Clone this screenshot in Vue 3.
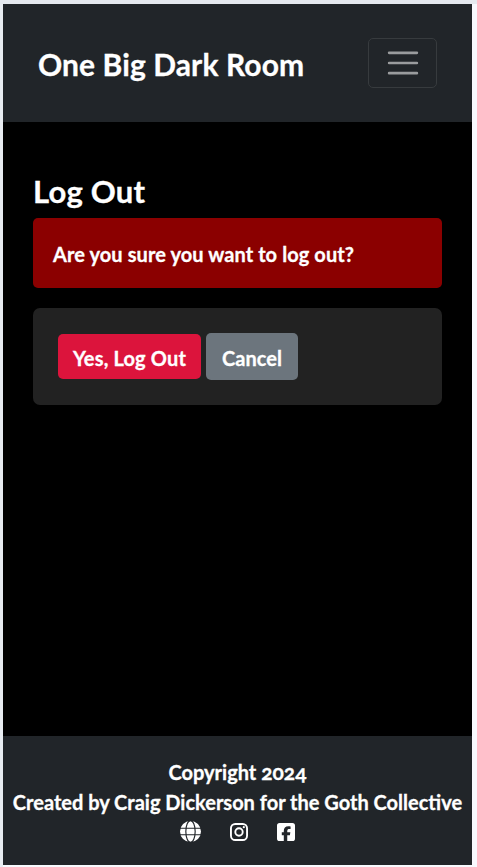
<script setup>
const creator = 'Craig Dickerson'
</script>

<template>
  <div class="frame">
    <div class="page">
      <header class="navbar">
        <a class="brand"><span>One Big Dark Room</span></a>
        <button class="toggler" aria-label="Toggle navigation">
          <svg width="38" height="38" viewBox="0 0 30 30">
            <path d="M4 7h22M4 15h22M4 23h22" stroke="rgba(255,255,255,.55)" stroke-width="2" stroke-linecap="round" />
          </svg>
        </button>
      </header>
      <main class="content">
        <h1>Log Out</h1>
        <div class="alert">Are you sure you want to log out?</div>
        <div class="card">
          <button class="btn danger">Yes, Log Out</button>
          <button class="btn secondary">Cancel</button>
        </div>
      </main>
      <footer class="footer">
        <p class="copy">Copyright <span class="year">2024</span></p>
        <p class="credit">Created by {{ creator }} for the Goth Collective</p>
        <div class="links">
          <svg class="globe" viewBox="0 0 512 512" fill="#fff">
            <circle cx="256" cy="256" r="256" />
            <g fill="none" stroke="#212529" stroke-width="28">
              <path d="M0 176H512M0 336H512" />
              <ellipse cx="256" cy="256" rx="114" ry="264" />
            </g>
          </svg>
          <svg class="social" viewBox="0 0 18 18" fill="none" stroke="#fff">
            <rect x=".95" y=".95" width="16.1" height="16.1" rx="4.3" stroke-width="1.9" />
            <circle cx="9" cy="9" r="3.7" stroke-width="1.9" />
            <circle cx="13.8" cy="4.2" r="1.1" fill="#fff" stroke="none" />
          </svg>
          <svg class="social" viewBox="0 0 448 448" fill="#fff">
            <path d="M64 0H384a64 64 0 0 1 64 64V384a64 64 0 0 1-64 64H255V303h66l11-72h-77v-26c0-39 15-54 55-54 12 0 22 0 28 1V87c-11-3-37-6-52-6-80 0-117 38-117 120v30h-50v72h50V448H64a64 64 0 0 1-64-64V64A64 64 0 0 1 64 0z" />
          </svg>
        </div>
      </footer>
    </div>
  </div>
</template>

<style>
body { margin: 0; background: #f8f9fe; }
</style>

<style scoped>
* { box-sizing: border-box; }
.frame {
  height: 867px;
  padding: 4px 5px 2px 3px;
  background: linear-gradient(#e5e9ef 0 4px, transparent 4px), linear-gradient(90deg, #e8ecf1 0 3px, #f8f9fe 3px);
}
.page {
  display: flex;
  flex-direction: column;
  height: 861px;
  background: #000;
  color: #fff;
  font-family: Lato, "Noto Sans", sans-serif;
  font-size: 20px;
  font-weight: 700;
  line-height: 30px;
  white-space: nowrap;
  -webkit-text-stroke: .3px #fff;
}
.navbar {
  display: flex;
  align-items: center;
  justify-content: space-between;
  height: 118px;
  padding: 0 35px;
  background: #212529;
}
.brand { font-size: 30px; line-height: 46px; padding-top: 1px; letter-spacing: .1px; }
.toggler {
  display: grid;
  place-items: center;
  width: 69px;
  height: 50px;
  padding: 0;
  background: transparent;
  border: 1px solid #373b3e;
  border-radius: 5px;
}
.content { flex: 1; padding: 49px 30px 0; }
h1 { margin: 0; height: 47px; font-size: 31px; line-height: 40px; font-weight: 700; letter-spacing: .2px; }
.alert { height: 70px; padding: 21px 20px; background: #8b0000; border-radius: 5px; letter-spacing: .09px; }
.card {
  display: flex;
  align-items: center;
  gap: 5px;
  height: 97px;
  margin-top: 20px;
  padding: 0 25px;
  background: #222;
  border-radius: 7px;
}
.btn { padding: 3px 0 0; border: 0; border-radius: 5px; color: #fff; font: inherit; }
.danger { width: 143px; height: 45px; background: #dc143c; letter-spacing: .15px; }
.secondary { width: 92px; height: 47px; background: #6c757d; }
.footer { height: 129px; padding-top: 21px; background: #212529; text-align: center; }
.footer p { margin: 0; height: 30px; }
.year { font-size: 21px; font-variant-numeric: oldstyle-nums; }
.links { display: flex; align-items: center; justify-content: center; height: 29px; gap: 29px; }
.globe { width: 21px; height: 21px; }
.social { width: 18px; height: 18px; }
</style>
